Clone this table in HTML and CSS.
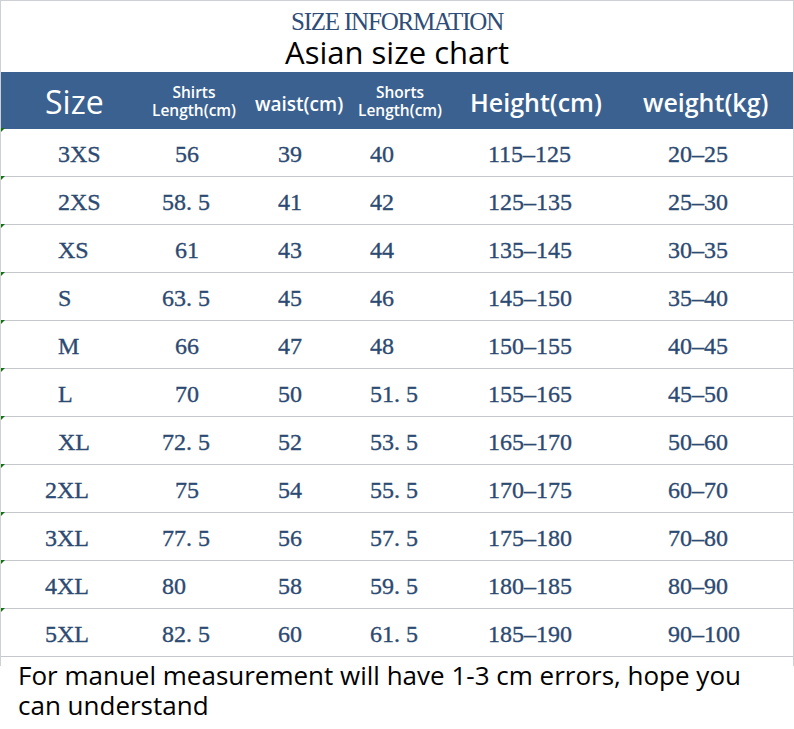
FILE: index.html
```html
<!DOCTYPE html>
<html>
<head>
<meta charset="utf-8">
<link rel="stylesheet" href="styles.css">
</head>
<body>
<div class="sheet">
  <div class="titles">
    <div class="title-en">SIZE INFORMATION</div>
    <div class="title-main">Asian size chart</div>
  </div>
  <div class="head">
    <div class="h h-size">Size</div>
    <div class="h h-shirts"><span>Shirts</span><span>Length(cm)</span></div>
    <div class="h h-waist">waist(cm)</div>
    <div class="h h-shorts"><span>Shorts</span><span>Length(cm)</span></div>
    <div class="h h-height">Height(cm)</div>
    <div class="h h-weight">weight(kg)</div>
  </div>
  <div class="rows">
    <div class="row"><span class="c c1">3XS</span><span class="c c2 in">56</span><span class="c">39</span><span class="c">40</span><span class="c">115–125</span><span class="c">20–25</span></div>
    <div class="row"><span class="c c1">2XS</span><span class="c c2">58. 5</span><span class="c">41</span><span class="c">42</span><span class="c">125–135</span><span class="c">25–30</span></div>
    <div class="row"><span class="c c1">XS</span><span class="c c2 in">61</span><span class="c">43</span><span class="c">44</span><span class="c">135–145</span><span class="c">30–35</span></div>
    <div class="row"><span class="c c1">S</span><span class="c c2">63. 5</span><span class="c">45</span><span class="c">46</span><span class="c">145–150</span><span class="c">35–40</span></div>
    <div class="row"><span class="c c1">M</span><span class="c c2 in">66</span><span class="c">47</span><span class="c">48</span><span class="c">150–155</span><span class="c">40–45</span></div>
    <div class="row"><span class="c c1">L</span><span class="c c2 in">70</span><span class="c">50</span><span class="c">51. 5</span><span class="c">155–165</span><span class="c">45–50</span></div>
    <div class="row"><span class="c c1">XL</span><span class="c c2">72. 5</span><span class="c">52</span><span class="c">53. 5</span><span class="c">165–170</span><span class="c">50–60</span></div>
    <div class="row"><span class="c c1 out">2XL</span><span class="c c2 in">75</span><span class="c">54</span><span class="c">55. 5</span><span class="c">170–175</span><span class="c">60–70</span></div>
    <div class="row"><span class="c c1 out">3XL</span><span class="c c2">77. 5</span><span class="c">56</span><span class="c">57. 5</span><span class="c">175–180</span><span class="c">70–80</span></div>
    <div class="row"><span class="c c1 out">4XL</span><span class="c c2">80</span><span class="c">58</span><span class="c">59. 5</span><span class="c">180–185</span><span class="c">80–90</span></div>
    <div class="row"><span class="c c1 out">5XL</span><span class="c c2">82. 5</span><span class="c">60</span><span class="c">61. 5</span><span class="c">185–190</span><span class="c">90–100</span></div>
  </div>
</div>
<p class="note">For manuel measurement will have 1-3 cm errors, hope you can understand</p>
</body>
</html>
```

FILE: styles.css
```css
html, body {
  margin: 0;
  padding: 0;
  background: #ffffff;
}
body {
  width: 794px;
  font-family: "Open Sans", "Noto Sans", sans-serif;
}
.sheet {
  border: 1px solid #cfcfd6;
  border-bottom: none;
  padding-bottom: 9px;
}
.titles {
  height: 71px;
  display: flex;
  flex-direction: column;
  align-items: center;
}
.title-en {
  font-family: "Liberation Serif", serif;
  font-size: 25px;
  letter-spacing: -1.2px;
  color: #2e4d78;
  line-height: 22px;
  margin-top: 10px;
}
.title-main {
  font-size: 31px;
  line-height: 32px;
  margin-top: 3px;
  color: #000;
}
.head {
  height: 57px;
  background: #3b6191;
  display: flex;
  align-items: center;
  color: #ffffff;
  padding-top: 6px;
  box-sizing: border-box;
}
.h {
  flex: none;
  font-weight: 600;
  white-space: nowrap;
}
.h-size {
  width: 140px;
  padding-left: 44px;
  box-sizing: border-box;
  font-size: 32px;
  font-weight: 400;
  margin-top: -4px;
}
.h-shirts, .h-shorts {
  width: 110px;
  display: flex;
  flex-direction: column;
  align-items: center;
  font-size: 15.5px;
  line-height: 18px;
  margin-top: -6px;
  box-sizing: border-box;
}
.h-shirts { padding-right: 4px; }
.h-shorts { padding-right: 12px; }
.h-waist {
  width: 100px;
  padding-left: 4px;
  box-sizing: border-box;
  font-size: 19px;
}
.h-height {
  width: 170px;
  padding-left: 9px;
  box-sizing: border-box;
  font-size: 25px;
  margin-top: -4px;
}
.h-weight {
  padding-left: 12px;
  font-size: 25px;
  margin-top: -4px;
}
.rows {
  display: flex;
  flex-direction: column;
}
.row {
  position: relative;
  height: 48px;
  box-sizing: border-box;
  border-bottom: 1px solid #c6c6cf;
  display: grid;
  grid-template-columns: 160px 116px 92px 118px 180px 1fr;
  align-items: center;
  padding-top: 3px;
  font-family: "Liberation Serif", serif;
  font-size: 24px;
  color: #2c4a72;
  -webkit-text-stroke: 0.35px #2c4a72;
}
.row::before {
  content: "";
  position: absolute;
  left: 0;
  top: -1px;
  width: 0;
  height: 0;
  border-top: 4px solid #157015;
  border-right: 4px solid transparent;
}
.c {
  padding-left: 1px;
  white-space: pre;
}
.c1 { padding-left: 57px; }
.c1.out { padding-left: 44px; }
.c2.in { padding-left: 14px; }
.note {
  width: 760px;
  box-sizing: border-box;
  margin: -6px 0 0 0;
  padding-left: 18px;
  font-size: 26px;
  line-height: 30px;
  color: #000;
}
```
